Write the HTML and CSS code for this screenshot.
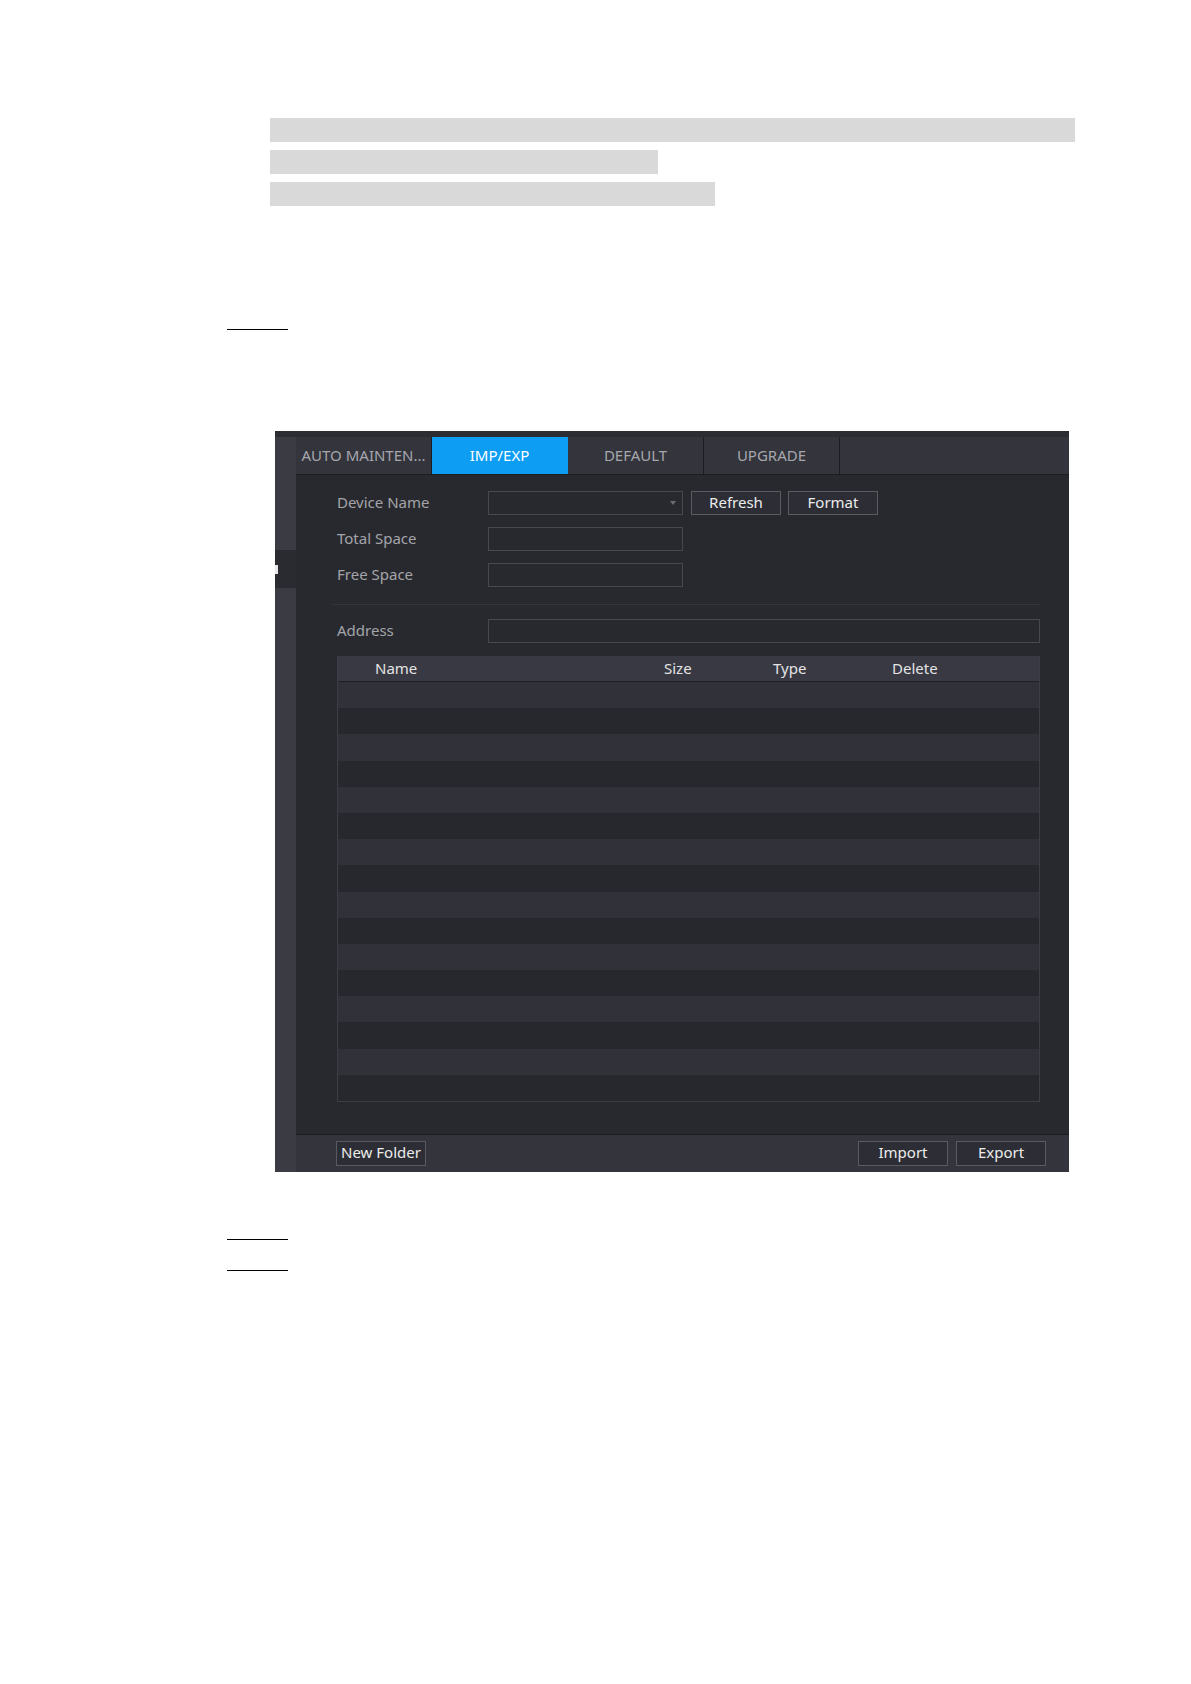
FILE: index.html
```html
<!DOCTYPE html>
<html lang="en">
<head>
    <meta charset="UTF-8">
    <title>IMP/EXP</title>
    <link rel="stylesheet" href="styles.css">
</head>
<body>
    <div class="doc">
        <div class="redacted">
            <span class="bar-long"></span>
            <span class="bar-short"></span>
            <span class="bar-mid"></span>
        </div>

        <div class="step-mark first"></div>

        <div class="figure">
            <div class="top-strip"></div>
            <div class="frame-body">
                <div class="sidebar">
                    <div class="side-item active"><span class="tick"></span></div>
                </div>

                <div class="main">
                    <div class="tabs">
                        <div class="tab">AUTO MAINTEN...</div>
                        <div class="tab active">IMP/EXP</div>
                        <div class="tab">DEFAULT</div>
                        <div class="tab">UPGRADE</div>
                    </div>

                    <div class="content">
                        <div class="field-row">
                            <label>Device Name</label>
                            <div class="input select"><span class="caret"></span></div>
                            <button class="btn">Refresh</button>
                            <button class="btn">Format</button>
                        </div>
                        <div class="field-row">
                            <label>Total Space</label>
                            <div class="input"></div>
                        </div>
                        <div class="field-row">
                            <label>Free Space</label>
                            <div class="input"></div>
                        </div>

                        <div class="divider"></div>

                        <div class="field-row address">
                            <label>Address</label>
                            <div class="input wide"></div>
                        </div>

                        <div class="file-table">
                            <div class="thead">
                                <span class="c-name">Name</span>
                                <span class="c-size">Size</span>
                                <span class="c-type">Type</span>
                                <span class="c-del">Delete</span>
                            </div>
                            <div class="tbody">
                                <div class="row"></div><div class="row"></div>
                                <div class="row"></div><div class="row"></div>
                                <div class="row"></div><div class="row"></div>
                                <div class="row"></div><div class="row"></div>
                                <div class="row"></div><div class="row"></div>
                                <div class="row"></div><div class="row"></div>
                                <div class="row"></div><div class="row"></div>
                                <div class="row"></div><div class="row"></div>
                            </div>
                        </div>
                    </div>

                    <div class="footer">
                        <button class="btn">New Folder</button>
                        <div class="footer-right">
                            <button class="btn">Import</button>
                            <button class="btn">Export</button>
                        </div>
                    </div>
                </div>
            </div>
        </div>

        <div class="step-mark second"></div>
        <div class="step-mark third"></div>
    </div>
</body>
</html>
```

FILE: styles.css
```css
body {
    margin: 0;
    background: #fff;
    font-family: "Noto Sans", "DejaVu Sans", sans-serif;
}

.doc {
    padding-top: 118px;
    padding-bottom: 100px;
}

/* greyed-out text lines */
.redacted {
    margin-left: 270px;
    display: flex;
    flex-direction: column;
    gap: 8px;
}

.redacted span {
    display: block;
    height: 24px;
    background: #d9d9d9;
}

.bar-long { width: 805px; }
.bar-short { width: 388px; }
.bar-mid { width: 445px; }

.step-mark {
    width: 61px;
    margin-left: 227px;
    border-top: 1px solid #000;
}

.step-mark.first { margin-top: 123px; }
.step-mark.second { margin-top: 67px; }
.step-mark.third { margin-top: 30px; }

/* device screenshot */
.figure {
    margin: 101px 0 0 275px;
    width: 794px;
    height: 741px;
    background: #28292e;
    display: flex;
    flex-direction: column;
    font-size: 15px;
}

.top-strip {
    height: 6px;
    background: #2c2d33;
}

.frame-body {
    flex: 1;
    display: flex;
}

.sidebar {
    width: 21px;
    background: #3a3b43;
    padding-top: 113px;
}

.side-item {
    height: 38px;
    background: #2a2b30;
    display: flex;
    align-items: center;
}

.tick {
    width: 3px;
    height: 9px;
    background: #e8e8e8;
}

.main {
    flex: 1;
    display: flex;
    flex-direction: column;
}

.tabs {
    height: 37px;
    display: flex;
    background: #33343c;
    border-bottom: 1px solid #1c1d21;
}

.tab {
    box-sizing: border-box;
    width: 136px;
    padding-bottom: 2px;
    border-right: 1px solid #1c1d21;
    display: flex;
    align-items: center;
    justify-content: center;
    color: #a6a7ac;
    white-space: nowrap;
}

.tab.active {
    background: #0d9df2;
    color: #fff;
    border-right-color: #0d9df2;
}

.content {
    flex: 1;
    padding: 16px 29px 0 41px;
}

.field-row {
    display: flex;
    align-items: center;
    height: 24px;
    margin-bottom: 12px;
}

.field-row label {
    width: 151px;
    padding-bottom: 3px;
    color: #a4a5aa;
}

.input {
    box-sizing: border-box;
    width: 195px;
    height: 24px;
    border: 1px solid #48494f;
}

.input.wide {
    flex: 1;
}

.select {
    display: flex;
    align-items: center;
    justify-content: flex-end;
    padding-right: 6px;
}

.caret {
    width: 0;
    height: 0;
    border-left: 3px solid transparent;
    border-right: 3px solid transparent;
    border-top: 4px solid #6c6d73;
}

.btn {
    box-sizing: border-box;
    width: 90px;
    height: 24px;
    padding: 0 0 3px;
    border: 1px solid #5a5b62;
    background: #2d2e35;
    color: #ececec;
    font-family: inherit;
    font-size: 15px;
}

.field-row .btn {
    margin-left: 8px;
}

.field-row .btn + .btn {
    margin-left: 7px;
}

.divider {
    margin: 17px 0 14px -4px;
    border-top: 1px solid #35363c;
}

.field-row.address {
    margin-bottom: 13px;
}

.file-table {
    border: 1px solid #3d3e45;
    border-top: none;
}

.thead {
    box-sizing: border-box;
    height: 26px;
    padding-bottom: 2px;
    display: grid;
    grid-template-columns: 326px 109px 119px 1fr;
    align-items: center;
    background: #383943;
    border-bottom: 1px solid #1f2024;
    color: #e4e4e4;
}

.c-name {
    padding-left: 37px;
}

.row {
    height: 26.2px;
    background: #27282d;
}

.row:nth-child(odd) {
    background: #303139;
}

.footer {
    height: 37px;
    border-top: 1px solid #1c1d21;
    background: #33343c;
    display: flex;
    align-items: center;
    padding: 0 23px 0 40px;
}

.footer .btn {
    height: 25px;
}

.footer-right {
    margin-left: auto;
    display: flex;
    gap: 8px;
}
```
